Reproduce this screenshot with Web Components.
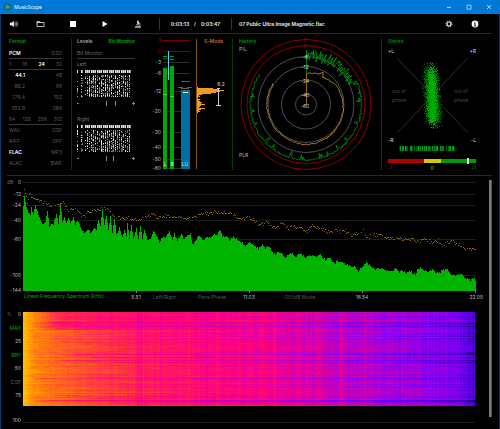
<!DOCTYPE html>
<html lang="en">
<head>
<meta charset="utf-8">
<title>MusicScope</title>
<style>
html,body{margin:0;min-height:100%;background:#000}
body{font-family:Inter,"Liberation Sans",Arial,sans-serif;font-size:5px;line-height:7px;color:#aaa}
</style>
</head>
<body>
<ms-window>
  <ms-titlebar slot="title">MusicScope</ms-titlebar>
  <ms-toolbar slot="tools" elapsed="0:03:13" total="0:03:47">07 Public Ultra Image Magnetic.flac</ms-toolbar>
  <ms-format slot="panels"></ms-format>
  <ms-levels slot="panels"></ms-levels>
  <ms-meter slot="panels"></ms-meter>
  <ms-history slot="panels"></ms-history>
  <ms-stereo slot="panels"></ms-stereo>
  <ms-spectrum slot="charts"></ms-spectrum>
  <ms-spectrogram slot="charts"></ms-spectrogram>
</ms-window>
<script>
const BASE = `*{box-sizing:border-box}:host{display:block;min-width:0}
button{font:inherit;color:inherit;background:none;border:0;padding:0;margin:0;cursor:pointer}
svg{display:block}.chart{width:100%;height:auto;overflow:visible}
text{font-family:Inter,"Liberation Sans",Arial,sans-serif;font-size:5px}.head{font-weight:600}`;
const define = (name, render) => customElements.define(name, class extends HTMLElement {
  connectedCallback() {
    if (this.shadowRoot) return;
    const root = this.attachShadow({ mode: 'open' });
    root.innerHTML = '<style>' + BASE + '</style>' + render(this);
    if (name === 'ms-spectrogram') paintSpectrogram(root.querySelector('canvas'));
  }
});
const random = seed => () => {
  seed = (seed + 0x6D2B79F5) | 0;
  let t = Math.imul(seed ^ (seed >>> 15), 1 | seed);
  t = (t + Math.imul(t ^ (t >>> 7), 61 | t)) ^ t;
  return ((t ^ (t >>> 14)) >>> 0) / 4294967296;
};
const lerp = (pts, x) => {
  let i = 0;
  while (i < pts.length - 4 && pts[i + 2] < x) i += 2;
  const k = Math.min(1, Math.max(0, (x - pts[i]) / (pts[i + 2] - pts[i])));
  return pts[i + 1] + (pts[i + 3] - pts[i + 1]) * k;
};
const px = (x, y, w = 1, h = 1) => `M${x} ${y}h${w}v${h}h${-w}z`;

define('ms-window', () => `<style>
:host{border:solid #003a6b;border-width:0 1px 1px;min-height:100vh;background:#000}
.panels{display:grid;grid-template-columns:64fr 77fr 84fr 149fr 111fr;margin:0 7px 0 6px;padding:4px 0 5px;border:solid #004800;border-width:1px 0}
.lower{display:flex;margin:0 7px 0 5px;padding-top:4px}
.charts{flex:1;min-width:0}
.bar{width:3px;margin:0 0 8px 1px;background:#7c7c7c;border-right:1px solid #555}
</style><slot name="title"></slot><slot name="tools"></slot>
<div class="panels"><slot name="panels"></slot></div>
<div class="lower"><div class="charts"><slot name="charts"></slot></div><div class="bar" role="scrollbar" aria-orientation="vertical" aria-valuenow="0" aria-label="Charts"></div></div>`);

define('ms-titlebar', () => `<style>
:host{display:flex;align-items:center;height:14px;background:#0078d7;color:#fff;margin:0 -1px;padding:0 1px 0 4px;font-family:"Noto Sans","Open Sans",sans-serif}
.name{flex:1;padding-left:3px}button{width:20px;height:14px;display:grid;place-items:center}
</style>
<svg width="7" height="8" viewBox="0 0 7 8"><circle cx="3.5" cy="4" r="3.4" fill="#125c62"/><path d="M2 6.5V3l1-1.5v4M4 6.5V2.5l1 1v2M1 4h5" stroke="#58b98c" stroke-width=".7" fill="none"/></svg>
<span class="name"><slot></slot></span>
<button aria-label="Minimize"><svg width="6" height="6"><path d="M1 3.5h4" stroke="#d6ebff" stroke-width=".8"/></svg></button>
<button aria-label="Maximize"><svg width="6" height="6"><path d="M1 1.200h4v4h-4z" stroke="#d6ebff" stroke-width=".7" fill="none"/></svg></button>
<button aria-label="Close"><svg width="6" height="6"><path d="M1 1l4 4M5 1l-4 4" stroke="#e6f3ff" stroke-width=".7"/></svg></button>`);

define('ms-toolbar', el => `<style>
:host{display:grid;grid-template-columns:24px 31px 33px 32px 33px 5px 72px 1fr 26px 26px 11px;align-items:center;height:19px;color:#f0f0f0;font-weight:600}
button{height:14px;display:grid;place-items:center}
.time,.file{border-left:1px solid #005a00;height:12px;line-height:12px}
.time{grid-column:7;display:flex;justify-content:center;gap:5px}.file{padding-left:7px;white-space:nowrap;overflow:hidden}
</style>
<button aria-label="Volume"><svg width="9" height="8" fill="#fff"><path d="M1 2.800h1.600L4.800 1v6L2.600 5.200H1z"/><path d="M5.600 2.600q1 1.400 0 2.800M6.600 1.800q1.600 2.200 0 4.400M7.600 1.200q2 2.800 0 5.600" fill="none" stroke="#ddd" stroke-width=".6"/></svg></button>
<button aria-label="Open folder"><svg width="9" height="8"><path d="M1 6.500v-5h2.600l.8 1H8v4zM1 2.500h4" fill="none" stroke="#e8e8e8" stroke-width=".8"/></svg></button>
<button aria-label="Stop"><svg width="6" height="6"><path d="M0 0h6v6H0z" fill="#fff"/></svg></button>
<button aria-label="Play"><svg width="6" height="6"><path d="M.5 0l5 3-5 3z" fill="#fff"/></svg></button>
<button aria-label="Microscope"><svg width="8" height="8" fill="none" stroke="#e8e8e8"><path d="M3.600 .8l.8 3.400" stroke-width="1.600"/><path d="M5 2.400q2.200 1.600.4 4M2 4.900h3" stroke-width=".7"/><path d="M1 7h6" stroke-width="1.200"/></svg></button>
<div class="time"><span>${el.getAttribute('elapsed')}</span><span>/</span><span>${el.getAttribute('total')}</span></div>
<div class="file"><slot></slot></div>
<button aria-label="Settings"><svg width="8" height="8" fill="none" stroke="#eee"><circle cx="4" cy="4" r="2" stroke-width="1.200"/><circle cx="4" cy="4" r="3" stroke-width="1" stroke-dasharray="1.2 1.156"/></svg></button>
<button aria-label="Information"><svg width="8" height="8"><circle cx="4" cy="4" r="3.400" fill="#fff"/><path d="M4 1.600v1M4 3.300v2.800M3.300 3.600h.8M3.200 6h1.600" stroke="#000" stroke-width=".9"/></svg></button>`);

define('ms-format', () => {
  const row = (a, b, on = '', cls = '') => `<div class="row ${cls}">${[a, b].map((t, i) => `<span class="${t === on ? 'on' : ''} ${i ? '' : 'first'}">${t}</span>`).join('')}</div>`;
  const four = (items, on) => `<div class="row line">${items.map(t => `<span class="${t === on ? 'on' : ''}">${t}</span>`).join('')}</div>`;
  return `<style>:host{padding:0 9px 0 2px;color:#5a5a5a}
h2{margin:0;font-size:5px;font-weight:600;line-height:7px;height:10px;color:#00980a}
.row{display:flex;justify-content:space-between;height:11px;line-height:11px}.line{line-height:10px;border-bottom:1px solid #3a3a3a}
.on{color:#fff;font-weight:600}.rate .first{min-width:16px;text-align:right}</style>
<h2>Format</h2>${row('PCM', 'DSD', 'PCM', 'line')}${four(['1', '16', '24', '32'], '24')}
${row('44.1', '48', '44.1', 'rate')}${row('88.2', '96', '', 'rate')}${row('176.4', '192', '', 'rate')}${row('352.8', '384', '', 'rate')}
${four(['64', '128', '256', '512'])}${row('WAV', 'DSF')}${row('AIFF', 'DFF')}${row('FLAC', 'MP3', 'FLAC')}${row('ALAC', 'BWF')}`;
});

define('ms-levels', () => {
  const bits = (seed, mark) => {
    const r = random(seed), tones = ['', '', ''];
    for (let c = 0; c < 27; c++) {
      if (c === 1 || c === 3) continue;
      tones[0] += px(c * 2, 0, 1, 3);
      if (c % 3) tones[1] += px(c * 2 + 1, 0, 1, 3);
      const density = c < 5 ? .45 : .55 + .3 * r();
      for (let y = 5; y < 27; y++) if (r() < density) tones[Math.floor(r() * 3)] += px(c * 2, y);
      if (c % 5 === 2) for (let y = 5; y < 27; y++) if (r() < .35) tones[2] += px(c * 2 + 1, y);
    }
    return `<svg class="chart" viewBox="0 0 58 37" shape-rendering="crispEdges"><path d="${tones[0]}" fill="#e2e2e2"/><path d="${tones[1]}" fill="#999"/><path d="${tones[2]}" fill="#666"/>
<path d="M0 33.500h2M55 33.500h3M56.500 32v3" stroke="#888"/><path d="M29.500 31v5M${mark} 31v5" stroke="#888"/></svg>`;
  };
  return `<style>:host{border-left:1px solid #003c00;padding:0 13px 0 5px}
header{display:flex;justify-content:space-between;height:10px;color:#aaa;font-weight:600}header button{height:7px}.on{color:#00a80a}
.sub{height:11px;line-height:10px;border-bottom:1px solid #3a3a3a;color:#666}
.ch{height:11px;line-height:11px;color:#777}.ch2{margin-top:7px}</style>
<header><button>Levels</button><button class="on">Bit Monitor</button></header><div class="sub">Bit Monitor</div>
<div class="ch">Left</div>${bits(11, 38.5)}<div class="ch ch2">Right</div>${bits(29, 36.5)}`;
});

define('ms-meter', () => {
  // Scale positions in the panel's own units, top of the panel at zero.
  const scale = [[3, 2], [0, 13], [-3, 24], [-6, 35], [-12, 53], [-20, 73], [-30, 94], [-40, 109], [-50, 121], [-60, 130]];
  const rows = [1, 16, 22, 27, 23, 19, 14, 5, 2, 3, 1, 1, 3, 2, 3, 5, 4, 8, 4, 3, 2, 8, 4, 2, 3, 1];
  return `<svg class="chart" viewBox="0 0 84 132" shape-rendering="crispEdges">
${scale.map(([v, y]) => `<path d="M15 ${y + .5}h27" stroke="${v >= 0 ? '#700' : '#2c2c2c'}"/><text x="13" y="${y + 2}" text-anchor="end" fill="${v >= 0 ? '#b00' : '#bbb'}">${v}</text>`).join('')}
<path d="M15 30h4v101h-4zM22 28h4v103h-4z" fill="#00a800"/><path d="M15 56.500h4M22 58.500h4" stroke="#21ef21"/>
<path d="M15 18.500h4M22 18.500h4M22 21.500h4" stroke="#009c2a"/><path d="M15 20.500h4" stroke="#006418"/>
<path d="M20.500 13v29" stroke="#56cdf2"/><path d="M33 52h9v79h-9z" fill="#00709e"/><path d="M33 43.500h9" stroke="#007cab"/>
<path d="M35 54.500h5" stroke="#fff"/><path d="M30 49.500h5M39 49.500h5M33 50.500h8" stroke="#8a5512"/>
<path d="M48.500 1v130" stroke="#8a5512"/><path d="${rows.map((w, i) => px(49, 49 + i, w)).join('')}" fill="#ee9b20"/>
<path d="M70.500 50v17M69 50.500h3M68 67h5" stroke="#ccc"/><text x="73" y="48" text-anchor="middle" fill="#ddd">6.2</text>
<text x="56" y="5" class="head" fill="#b87414">S-Mode</text>
<text x="17" y="128" text-anchor="middle" fill="#dfd">L</text><text x="24" y="128" text-anchor="middle" fill="#dfd">R</text><text x="37" y="128" text-anchor="middle" fill="#bde3f5">LU</text></svg>`;
});

define('ms-history', () => {
  const r = random(5), cx = 73, cy = 66.5;
  const trace = (fn, step) => {
    let d = '';
    for (let a = 0; a <= 303; a += step) {
      const q = fn(a), t = a * Math.PI / 180;
      d += (d ? 'L' : 'M') + (cx + q * Math.sin(t)).toFixed(1) + ' ' + (cy - q * Math.cos(t)).toFixed(1);
    }
    return d;
  };
  const green = trace(a => a < 65 ? 50 + (r() - .5) * (a > 50 ? 8 : 13) : 55.5 + (r() - .5) * 2 - (r() < .1 ? r() * 7 : 0), 1);
  const gold = trace(a => lerp([0, 31, 10, 32, 22, 33, 28, 36, 32, 32, 42, 33, 60, 36, 90, 37, 130, 39, 180, 40, 215, 39, 270, 39, 303, 39], a) + (r() - .5) * 1.2, 2);
  return `<style>:host{border-left:1px solid #003c00}</style><svg class="chart" viewBox="0 0 148 132">
<g fill="none"><path d="M${cx} ${cy}m-65 0a65 65 0 1 0 130 0a65 65 0 1 0-130 0M${cx} ${cy}m-59 0a59 59 0 1 0 118 0a59 59 0 1 0-118 0" stroke="#8a0000"/>
<g stroke="#505050"><circle cx="${cx}" cy="${cy}" r="48"/><circle cx="${cx}" cy="${cy}" r="38"/><circle cx="${cx}" cy="${cy}" r="24.500"/><circle cx="${cx}" cy="${cy}" r="10.500"/></g>
<path d="${green}" stroke="#009a10" stroke-width=".8"/><path d="${gold}" stroke="#b87c22"/>
<path d="M73.500 12v24" stroke="#00800c"/><path d="M73.500 36v31" stroke="#a06818"/></g>
${[[3, 3], [0, 9], [-6, 20], [-12, 30], [-24, 44], [-40, 58], [-60, 69]].map(([v, y]) => `<text x="72" y="${y + 1}" text-anchor="middle" fill="${v >= 0 ? '#b00' : '#ddd'}">${v}</text>`).join('')}
<text x="6" y="5" class="head" fill="#00980a">History</text><text x="6" y="13" fill="#bbb">P/L</text><text x="6" y="119" fill="#bbb">PLR</text></svg>`;
});

define('ms-stereo', () => {
  const r = random(17), g = () => (r() + r() + r() + r() - 2) / 1.15;
  const tones = ['', '', ''];
  for (let i = 0; i < 2700; i++) {
    const k = r(), y = 34 + k * 48 + g() * 9, x = 49 + (y - 35) * .06 + g() * 6.5;
    if (y < 20 || y > 96) continue;
    const edge = Math.abs(x - 50) / 8 + r();
    tones[edge < .6 ? 0 : edge < 1.1 ? 1 : 2] += px(Math.floor(x), Math.floor(y));
  }
  let bars = '';
  for (let x = 17; x < 73; x++) if (r() < .66) bars += `<path d="M${x}.5 108v5" stroke="rgb(0,${60 + Math.floor(120 * r())},20)"/>`;
  return `<style>:host{border-left:1px solid #003c00}</style><svg class="chart" viewBox="0 0 110 132">
<path d="M15 20L86 95M86 20L15 95" stroke="#2c2c2c"/>
<g shape-rendering="crispEdges"><path d="${tones[2]}" fill="#004a00"/><path d="${tones[1]}" fill="#007c00"/><path d="${tones[0]}" fill="#00ac08"/>${bars}
<path d="M6 121h36v4H6z" fill="#b00000"/><path d="M42 121h17v4H42z" fill="#d2ca00"/><path d="M59 121h35v4H59z" fill="#009a10"/><path d="M85 120h2v6h-2z" fill="#ddd"/></g>
<text x="6" y="5" class="head" fill="#008a0a">Stereo</text>
<g fill="#ddd"><text x="6" y="15">+L</text><text x="94" y="15" text-anchor="end">+R</text><text x="6" y="104">-R</text><text x="94" y="104" text-anchor="end">-L</text></g>
<g fill="#444"><text x="10" y="55">out of</text><text x="10" y="64">phase</text><text x="72" y="55">out of</text><text x="72" y="64">phase</text></g>
<text x="6" y="132" fill="#a00">-1</text><text x="50" y="132" text-anchor="middle" fill="#c8c000">0</text><text x="94" y="132" text-anchor="end" fill="#009000">+1</text></svg>`;
});

define('ms-spectrum', () => {
  // Pairs of frequency position and depth, in thirds of a unit below the plot's top.
  const level = [23,95,24,68,26,100,28,115,30,120,31,97,33,125,35,90,37,115,40,135,42,148,45,145,47,110,49,155,53,148,56,120,58,148,60,90,62,145,64,130,66,150,68,130,70,150,73,128,75,155,77,140,80,160,84,178,88,165,90,175,94,162,96,165,98,135,100,155,102,105,104,150,106,125,108,165,110,128,112,175,114,135,116,180,119,160,122,190,124,170,126,190,127,147,129,190,131,150,133,192,136,165,138,195,140,155,142,195,144,170,147,198,150,198,153,172,156,185,159,205,162,190,165,192,169,170,172,200,174,180,177,200,181,182,184,195,187,185,190,180,192,210,196,195,199,188,203,200,206,185,209,192,213,185,217,178,219,165,222,185,226,188,229,200,233,187,236,195,239,203,242,208,245,218,249,205,253,212,258,225,262,212,265,222,268,215,272,232,275,242,278,232,281,240,285,250,290,235,295,245,301,240,305,250,310,245,315,248,320,242,325,260,328,250,332,262,335,268,337,258,340,265,345,270,350,275,355,278,358,290,363,275,367,265,370,275,375,285,380,285,385,290,390,292,395,285,398,295,402,290,406,298,410,292,415,302,418,282,422,285,427,293,432,288,438,298,442,290,446,285,450,298,455,303,458,298,462,305,466,315,470,318,473,312,475,318];
  const peak = [23,65,24,45,27,85,29,60,33,70,40,78,50,95,60,92,64,85,67,105,75,105,80,118,84,128,87,115,95,108,102,102,108,105,112,120,117,130,125,135,128,125,131,135,140,137,145,130,152,120,157,130,165,125,172,130,180,125,183,133,190,130,195,128,202,115,208,120,213,112,220,112,225,118,229,112,233,122,237,128,241,138,245,128,249,130,255,142,260,150,265,145,270,155,275,160,282,145,288,160,295,155,302,165,307,172,312,155,320,162,327,172,335,168,340,172,345,168,350,185,355,180,360,175,363,170,367,190,372,180,378,182,385,190,392,192,400,190,404,198,412,192,418,202,425,195,432,205,438,198,442,212,452,198,455,212,460,210,465,222,470,225,475,222];
  const r = random(3);
  let area = 'M0 117', dots = '';
  for (let x = 0; x < 453; x++) {
    const y = Math.round(lerp(level, x + 23) / 3 + (r() - .5) * 2.4);
    area += `V${y}H${x + 1}`;
    if (r() < .85) dots += px(x, Math.round(lerp(peak, x + 23) / 3 + (r() - .5) * 3.4));
  }
  area += 'V117z';
  const grid = [[0, 8], [-12, 20], [-24, 31], [-40, 46], [-60, 65], [-100, 101], [-144, 116]];
  return `<style>.ticks{display:grid;grid-template-columns:106fr 14fr 43fr 52fr 22fr 78fr 48fr 97fr;margin:0 5px 0 17px;line-height:8px;height:8px;color:#555;text-align:center}
.ticks>*{white-space:nowrap}.n{color:#bbb;padding-top:1px}.t{color:#00a80a;text-align:left;padding-left:1px}.end{text-align:right}</style>
<svg class="chart" viewBox="0 6 482 112" shape-rendering="crispEdges">
${grid.map(([v, y]) => `<path d="M17 ${y + .5}h453" stroke="#1c1c1c"/><text x="15" y="${y + 2}" text-anchor="end" fill="#bbb">${v}</text>`).join('')}
<text x="1" y="10" fill="#666">dB</text>
<g transform="translate(17 0)"><path d="${area}" fill="#00b400"/><path d="${dots}" fill="#8a6208"/><path d="M113.500 117v2M226.500 117v2M339.500 117v2M452.500 117v2" stroke="#777"/></g></svg>
<div class="ticks"><span class="t">Linear Frequency Spectrum [kHz]</span><span class="n">5.51</span><button>Left/Right</button><button>Pans/Phase</button><span class="n">11.03</span><button>-200dB Mode</button><span class="n">16.54</span><span class="n end">22.05</span></div>`;
});

function paintSpectrogram(canvas) {
  const w = canvas.width, h = canvas.height, ctx = canvas.getContext('2d'), img = ctx.createImageData(w, h), r = random(42);
  const stops = [[255, 200, 0], [255, 135, 8], [255, 80, 45], [255, 25, 95], [250, 0, 135], [200, 0, 185], [135, 0, 245], [85, 0, 225], [40, 0, 130]];
  const base = [0, .02, 4, .06, 10, .12, 28, .18, 60, .26, 100, .33, 140, .4, 200, .46, 250, .53, 300, .6, 350, .67, 400, .73, 435, .78, 452, .9];
  const cols = Array.from({ length: w }, () => (r() - .5) * .07);
  for (const [a, b, v] of [[114, 120, .06], [182, 186, .05], [324, 326, .03], [164, 166, -.03], [236, 242, -.04], [250, 254, -.04], [292, 298, -.05], [316, 322, -.05], [340, 344, -.04]]) for (let x = a; x < b; x++) cols[x] += v;
  for (let y = 0; y < h; y++) {
    const line = (r() - .5) * .09 + (r() < .1 ? .1 : 0);
    const start = r() * 120;
    let drift = 0;
    for (let x = 0; x < w; x++) {
      drift = drift * .9 + (r() - .5) * .028;
      let v = lerp(base, x) + drift + (r() - .5) * .02;
      if (x > 10) v += cols[x] * Math.min(1, x / 120) + line * (x > start ? 1 : .35);
      if (y < 18 && x > 12) v += .16 * Math.min(1, (x - 12) / 24) * Math.max(0, 1 - x / 230) + (y > 9 && y < 14 && x > 28 && x < 60 ? .08 * r() : 0);
      v = Math.min(.999, Math.max(0, v)) * 8;
      const i = Math.floor(v), k = v - i, o = (y * w + x) * 4;
      for (let c = 0; c < 3; c++) img.data[o + c] = stops[i][c] + (stops[i + 1][c] - stops[i][c]) * k;
      img.data[o + 3] = 255;
    }
  }
  ctx.putImageData(img, 0, 0);
}
define('ms-spectrogram', () => `<style>
:host{display:grid;grid-template-columns:17px 1fr;margin:11px 13px 0 0}
canvas{display:block;width:100%;height:94px;margin-top:1px;image-rendering:pixelated}
.axis{display:flex;flex-direction:column;justify-content:space-between;align-items:flex-end;height:88px;padding-right:2px;color:#bbb}
.axis>*{height:7px;line-height:7px}.top{display:flex;justify-content:space-between;width:14px}.top span:first-child,.off{color:#666}.on{color:#00a80a}
.end{padding:11px 2px 0 0;text-align:right;color:#bbb}.rule{border-top:1px solid #1c1c1c;margin-top:16px;height:3px}</style>
<div class="axis"><div class="top"><span>%</span><span>0</span></div><button class="on">MAX</button><span>25</span><button class="on">BRY</button><span>50</span><button class="off">COF</button><span>75</span></div>
<canvas width="452" height="94" role="img" aria-label="Spectrogram"></canvas>
<div class="end">100</div><div class="rule"></div>`);
</script>
</body>
</html>
